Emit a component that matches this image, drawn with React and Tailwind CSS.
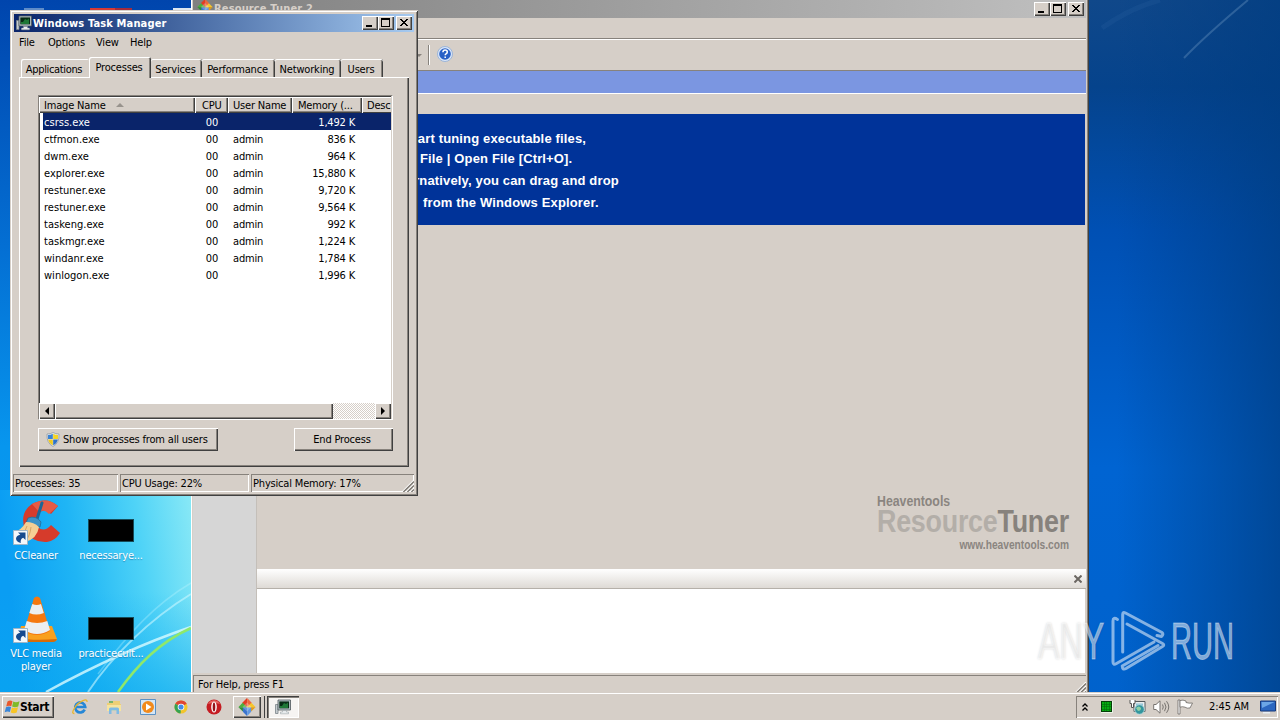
import React from "react";
import { clsx } from "clsx";

const raised =
  "bg-[#d6cfc8] shadow-[inset_1px_1px_0_#fff,inset_-1px_-1px_0_#404040,inset_-2px_-2px_0_#87827c]";
const sunken = "shadow-[inset_1px_1px_0_#87827c,inset_-1px_-1px_0_#fff]";

const processes = [
  { name: "csrss.exe", cpu: "00", user: "", memory: "1,492 K" },
  { name: "ctfmon.exe", cpu: "00", user: "admin", memory: "836 K" },
  { name: "dwm.exe", cpu: "00", user: "admin", memory: "964 K" },
  { name: "explorer.exe", cpu: "00", user: "admin", memory: "15,880 K" },
  { name: "restuner.exe", cpu: "00", user: "admin", memory: "9,720 K" },
  { name: "restuner.exe", cpu: "00", user: "admin", memory: "9,564 K" },
  { name: "taskeng.exe", cpu: "00", user: "admin", memory: "992 K" },
  { name: "taskmgr.exe", cpu: "00", user: "admin", memory: "1,224 K" },
  { name: "windanr.exe", cpu: "00", user: "admin", memory: "1,784 K" },
  { name: "winlogon.exe", cpu: "00", user: "", memory: "1,996 K" },
];

const tabs = [
  { label: "Applications", width: "w-[68px]" },
  { label: "Processes", width: "w-[62px]", active: true },
  { label: "Services", width: "w-[51px]" },
  { label: "Performance", width: "w-[73px]" },
  { label: "Networking", width: "w-[66px]" },
  { label: "Users", width: "w-[42px]" },
];

const Wallpaper = () => (
  <svg className="absolute inset-0" width="1280" height="720" viewBox="0 0 1280 720">
    <defs>
      <linearGradient id="wpLeft" x1="0" y1="0" x2="0" y2="1">
        <stop offset="0" stopColor="#0045ad" />
        <stop offset="0.35" stopColor="#0470d4" />
        <stop offset="0.62" stopColor="#0796ee" />
        <stop offset="1" stopColor="#0398f4" />
      </linearGradient>
      <linearGradient id="wpGlow" x1="0" y1="0.15" x2="1" y2="0">
        <stop offset="0" stopColor="#0a9df3" />
        <stop offset="0.35" stopColor="#1fb5f5" />
        <stop offset="0.7" stopColor="#4fd3f7" />
        <stop offset="1" stopColor="#8ae9f6" />
      </linearGradient>
      <linearGradient id="wpFade" x1="0" y1="0" x2="0" y2="1">
        <stop offset="0.5" stopColor="#0ba9f2" stopOpacity="0" />
        <stop offset="1" stopColor="#08a6ef" stopOpacity="0.6" />
      </linearGradient>
      <linearGradient id="wpRight" x1="0" y1="0" x2="0" y2="1">
        <stop offset="0" stopColor="#10488a" />
        <stop offset="0.12" stopColor="#05438c" />
        <stop offset="0.32" stopColor="#0050b4" />
        <stop offset="0.65" stopColor="#0064d2" />
        <stop offset="1" stopColor="#0062cc" />
      </linearGradient>
      <linearGradient id="wpShade" x1="0" y1="0" x2="1" y2="0">
        <stop offset="0.15" stopColor="#003c80" stopOpacity="0" />
        <stop offset="1" stopColor="#003c80" stopOpacity="0.7" />
      </linearGradient>
    </defs>
    <rect width="192" height="720" fill="url(#wpLeft)" />
    <rect y="490" width="192" height="204" fill="url(#wpGlow)" />
    <rect y="490" width="192" height="204" fill="url(#wpFade)" />
    <rect x="1088" width="192" height="720" fill="url(#wpRight)" />
    <rect x="1088" width="192" height="720" fill="url(#wpShade)" />
    <path d="M1184 58 Q1205 36 1248 0" fill="none" stroke="#5d8ab8" strokeOpacity=".45" strokeWidth="2" />
    <path d="M1102 28 Q1130 8 1160 0" fill="none" stroke="#3d74ae" strokeOpacity=".15" strokeWidth="5" />
    <g fill="none">
      <path d="M46 692 C90 668 135 646 191 627" stroke="#d9fbff" strokeOpacity=".8" strokeWidth="2.5" />
      <path d="M88 692 C112 656 150 619 191 594" stroke="#c9f7ff" strokeOpacity=".6" strokeWidth="2" />
      <path d="M98 674 C128 634 155 604 191 583" stroke="#c9f7ff" strokeOpacity=".3" strokeWidth="1.5" />
      <path d="M118 692 C138 664 160 642 191 628" stroke="#8fe86a" strokeWidth="2.5" />
    </g>
    {/* icons cut off behind the front window */}
    <rect x="24" y="8" width="20" height="3" fill="#5f8cc8" />
    <rect x="90" y="8" width="25" height="4" fill="#d83a34" />
    <rect x="115" y="8" width="17" height="4" fill="#a52c3c" />
    <rect x="173" y="8" width="18" height="3" fill="#dce6f0" />
  </svg>
);

const CaptionButtons = () => (
  <div className="flex">
    <span className={clsx("flex h-[14px] w-4 items-end pb-[3px] pl-1", raised)}>
      <i className="h-[2px] w-[6px] bg-black" />
    </span>
    <span className={clsx("mr-[2px] flex h-[14px] w-4 items-start pt-[2px] pl-[3px]", raised)}>
      <i className="h-[9px] w-[9px] border border-t-2 border-black" />
    </span>
    <span className={clsx("flex h-[14px] w-4 items-start pt-[3px] pl-1", raised)}>
      <svg width="8" height="7" viewBox="0 0 8 7" shapeRendering="crispEdges">
        <path d="M0 0h2v1h1v1h2v-1h1v-1h2v1h-1v1h-1v1h-1v1h1v1h1v1h1v1h-2v-1h-1v-1h-2v1h-1v1h-2v-1h1v-1h1v-1h1v-1h-1v-1h-1v-1h-1z" />
      </svg>
    </span>
  </div>
);

const SizeGrip = () => (
  <svg width="12" height="12" viewBox="0 0 12 12" className="shrink-0">
    <path d="M0 12 12 0M4 12 12 4M8 12 12 8" stroke="#fff" strokeWidth="1.2" />
    <path d="M1.4 12 12 1.4M5.4 12 12 5.4M9.4 12 12 9.4" stroke="#7d7872" strokeWidth="1.4" />
  </svg>
);

const MonitorIcon = () => (
  <svg width="16" height="16" viewBox="0 0 16 16" className="shrink-0">
    <path d="M.5 5.5h2.500v9H.5z" fill="#c5ccd0" stroke="#7b8489" strokeWidth=".8" />
    <path d="M3 1h12.500v10H3z" fill="#bcc8cd" stroke="#4c5659" strokeWidth=".8" />
    <path d="M4.300 2.400h9.800v7H4.300z" fill="#082c15" />
    <path d="M5 7h2l2-3 2 1 2-1.500V9H5z" fill="#1e7736" />
    <path d="M7.500 11.500h4v1.500h2v1.800H5.500V13h2z" fill="#e7ebed" stroke="#8f999d" strokeWidth=".5" />
  </svg>
);

const TunerIcon = () => (
  <svg width="18" height="18" viewBox="0 0 18 18" className="shrink-0">
    <path d="M9 0 4.800 4.200v4.300h4.400z" fill="#e23c24" />
    <path d="M9.200 0v8.500h4V4.200z" fill="#f0663c" />
    <path d="M.5 9 4.600 4.800 8.600 8.800v.4H.5z" fill="#4ab03e" />
    <path d="M.5 9.200 4.600 13.200l4-4z" fill="#2f8f33" />
    <path d="M17.500 9 13.400 4.800 9.400 8.800v.4h8.100z" fill="#f6c62c" />
    <path d="M17.500 9.200 13.400 13.200l-4-4z" fill="#e59d16" />
    <path d="M9 18 4.800 13.800V9.600h4.400z" fill="#3974cf" />
    <path d="M9.200 18V9.600h4v4.200z" fill="#5f97e2" />
    <path d="M9 4.500 13.500 9 9 13.500 4.500 9z" fill="#fff" fillOpacity=".25" />
  </svg>
);

const ShieldIcon = () => (
  <svg width="14" height="15" viewBox="0 0 14 15" className="shrink-0">
    <path d="M7 .5Q9.500 2 13 2q.6 9-6 12.500Q.4 11 1 2 4.500 2 7 .5z" fill="#e4e9ee" stroke="#8a949e" strokeWidth=".7" />
    <path d="M6.800 1.800V7H2Q1.800 5 2 3q3 0 4.800-1.200z" fill="#3b83d4" />
    <path d="M7.200 1.800V7H12q.2-2 0-4-3 0-4.800-1.200z" fill="#f5d423" />
    <path d="M6.800 13.200V7.400H2.100q.9 4 4.700 5.800z" fill="#f0c91e" />
    <path d="M7.200 13.200V7.400h4.700q-.9 4-4.700 5.800z" fill="#2f72c6" />
  </svg>
);

const ShortcutArrow = () => (
  <svg width="15" height="15" viewBox="0 0 15 15" className="absolute bottom-0 left-0">
    <path d="M.5.500h14v14H.5z" fill="#f5f8fb" stroke="#9fb6c8" />
    <path d="M5 2.500h7.500V10L10.200 7.700Q7 9 7.800 13 3 11.500 3 8.500 3.500 5.500 7.300 4.800z" fill="#174a8e" />
  </svg>
);

const CCleanerIcon = () => (
  <svg width="48" height="46" viewBox="0 0 48 46" className="absolute right-0 bottom-0">
    <path d="M45 7Q34-3 19 5 6 14 12 31q7 13 22 12 8-1 13-9l-9-8q-7 8-13 2-5-9 2-15 5-4 11 2z" fill="#d63b2b" />
    <path d="M45 7Q34-3 19 5l7 8q5-4 10 2z" fill="#e65b45" />
    <path d="M29 4 24 20" stroke="#1e6795" strokeWidth="3" strokeLinecap="round" />
    <path d="M15 19q8-3 13 4l-1 5-14-4z" fill="#3d93c8" stroke="#23668f" strokeWidth=".7" />
    <path d="M13 23q8 0 13 5Q24 40 12 43-1 41-1 34q9-2 14-11z" fill="#f5cf95" />
    <path d="M14 27q-3 9-9 12M18 28q-1 9-5 13" stroke="#d9a566" fill="none" />
  </svg>
);

const VlcIcon = () => (
  <svg width="48" height="48" viewBox="0 0 48 48" className="absolute right-0 bottom-0">
    <path d="M10 31h31l5 13q0 2-3 2H10q-4 0-3-3z" fill="#f9a01e" />
    <path d="M7 43q15 3 39 1-1 3-4 3H10q-4 0-3-4z" fill="#d86b08" />
    <path d="M23 3q3-3 6 0l10 33q-13 8-26 0z" fill="#f5780f" />
    <path d="m21.300 9-3 9q7 3 14.500 0L30 9q-4 2-8.700 0zM15.700 26l-2.700 9q13 8 26 0l-2.700-9q-10 4-20.600 0z" fill="#eceef0" />
  </svg>
);

const DesktopIcon = ({ label, children, className }) => (
  <div className={clsx("absolute flex w-[72px] flex-col items-center", className)}>
    {children}
    <span className="mt-1 text-center leading-[13px] text-white [text-shadow:0_1px_1px_#18609090]">
      {label}
    </span>
  </div>
);

const ResourceTuner = () => (
  <div className="absolute top-0 left-[191px] flex h-[693px] w-[898px] flex-col border-r border-l border-r-[#404040] border-l-white bg-[#d6cfc8] pr-[2px] pl-px shadow-[inset_-1px_0_0_#87827c]">
    <div className="flex h-[18px] shrink-0 items-start overflow-hidden bg-linear-to-r from-[#808080] to-[#c0c0c0]">
      <div className="-mt-[1px] ml-1 h-4 w-4 shrink-0 [&>svg]:h-4 [&>svg]:w-4">
        <TunerIcon />
      </div>
      <span className="mt-[1px] ml-px grow text-[11px] leading-4 font-bold tracking-[0.150px] text-[#d6cfc8]">
        Resource Tuner 2
      </span>
      <div className="mt-[2px] mr-[2px]">
        <CaptionButtons />
      </div>
    </div>
    <div className="h-[21px] shrink-0 border-b border-[#87827c]" />
    <div className="flex h-[31px] shrink-0 items-center border-t border-white pl-[223px]">
      <i className="h-0 w-0 border-x-[3px] border-t-[3px] border-x-transparent border-t-[#87827c]" />
      <i className="ml-[6px] h-5 w-[2px] border-r border-l border-r-white border-l-[#87827c]" />
      <svg width="16" height="16" viewBox="0 0 16 16" className="mb-[2px] ml-[7px]">
        <circle cx="8" cy="8" r="7.500" fill="#dce8fa" stroke="#8cabd6" strokeWidth=".8" />
        <circle cx="8" cy="8" r="5.800" fill="#2860c6" />
        <path d="M5.900 6.300q.1-2.200 2.200-2.200 2.200 0 2.200 1.900 0 1.100-1.200 1.800-.9.500-.9 1.400M8.200 10.600v1.500" fill="none" stroke="#fff" strokeWidth="1.500" />
      </svg>
    </div>
    <div className="h-[24px] shrink-0 border-t border-b border-t-[#87827c] border-b-white bg-[#7b96e1]" />
    <div className="h-[20px] shrink-0" />
    <div className="mr-px flex h-[111px] shrink-0 flex-col bg-[#003399] pt-[15px] pl-[211px] font-['Liberation_Sans'] text-[13px] font-bold tracking-[0.150px] whitespace-nowrap text-white">
      <p className="ml-[2px] h-[20px] leading-[20px]">start tuning executable files,</p>
      <p className="ml-[16px] h-[22px] leading-[20px]">File | Open File [Ctrl+O].</p>
      <p className="ml-[-15px] h-[22px] leading-[20px]">Alternatively, you can drag and drop</p>
      <p className="ml-[19px] leading-[20px]">from the Windows Explorer.</p>
    </div>
    <div className="flex min-h-0 grow">
      <div className="w-[64px] shrink-0 border-r border-[#c4bfb9] bg-[#d6d6d6]" />
      <div className="flex min-w-0 grow flex-col">
        <div className="flex grow flex-col items-end justify-end pr-[17px] pb-4 font-['Liberation_Sans'] font-bold tracking-normal text-[#8a8580]">
          <div className="flex w-[192px] flex-col whitespace-nowrap">
            <span className="h-[13px] origin-left scale-x-[0.82] text-[15px] leading-[14px]">Heaventools</span>
            <span className="mt-px h-[26px] origin-left scale-x-[0.84] text-[32px] leading-[26px] tracking-[-0.300px] text-[#b3aea8]">
              Resource<b className="text-[#87827d]">Tuner</b>
            </span>
            <span className="mt-[3px] origin-right scale-x-[0.85] text-right text-[12px] leading-4">www.heaventools.com</span>
          </div>
        </div>
        <div className="flex h-[20px] shrink-0 items-center justify-end border-b border-[#b5b0a9] bg-linear-to-b from-white to-[#dedad5] pr-1">
          <svg width="8" height="8" viewBox="0 0 8 8">
            <path d="m.5.500 7 7m0-7-7 7" stroke="#6b6762" strokeWidth="2" />
          </svg>
        </div>
        <div className="mr-px h-[84px] shrink-0 bg-white" />
      </div>
    </div>
    <div className="mt-[2px] flex h-[18px] shrink-0 items-center justify-between border-t border-l border-[#87827c] pl-1">
      <span className="leading-4">For Help, press F1</span>
      <span className="pt-[6px]"><SizeGrip /></span>
    </div>
  </div>
);

const ProcessList = () => (
  <div className="flex h-[325px] w-[355px] flex-col overflow-hidden border border-t-[#87827c] border-r-white border-b-white border-l-[#87827c] bg-[#d6cfc8] pr-px">
    <div className="flex h-[17px] shrink-0 overflow-hidden border-t border-[#404040] bg-[#d6cfc8] leading-[17px]">
      <span className={clsx("flex w-[156px] shrink-0 items-center pl-[5px]", raised)}>
        Image Name
        <i className="ml-[10px] h-0 w-0 border-x-[4px] border-b-[4px] border-x-transparent border-b-[#98938d]" />
      </span>
      <span className={clsx("w-[33px] shrink-0 pl-[7px]", raised)}>CPU</span>
      <span className={clsx("w-[64px] shrink-0 pl-[5px]", raised)}>User Name</span>
      <span className={clsx("w-[70px] shrink-0 pl-[6px]", raised)}>Memory (...</span>
      <span className="w-[40px] shrink-0 pl-[5px] shadow-[inset_1px_1px_0_#fff,inset_0_-1px_0_#404040]">Desc</span>
    </div>
    <div className="grow border-l border-[#404040] bg-white">
      {processes.map((process, i) => (
        <div
          key={i}
          className={clsx(
            "flex h-[17px] leading-[19px]",
            i === 0 && "ml-[3px] bg-[#0a246a] text-white"
          )}
        >
          <span className={clsx("shrink-0 tracking-[0.020px]", i === 0 ? "w-[152px] pl-px" : "w-[155px] pl-[4px]")}>
            {process.name}
          </span>
          <span className="w-[23px] shrink-0 text-right">{process.cpu}</span>
          <span className="w-[64px] shrink-0 pl-[15px]">{process.user}</span>
          <span className="w-[73px] shrink-0 text-right">{process.memory}</span>
        </div>
      ))}
    </div>
    <div className="flex h-[16px] shrink-0 bg-[repeating-conic-gradient(#fff_0_25%,#d6cfc8_0_50%)] bg-size-[2px_2px]">
      <span className={clsx("flex w-4 items-center justify-center", raised)}>
        <i className="h-0 w-0 border-y-[4px] border-r-[4px] border-y-transparent border-r-black" />
      </span>
      <span className={clsx("w-[278px]", raised)} />
      <span className={clsx("ml-auto flex w-4 items-center justify-center", raised)}>
        <i className="h-0 w-0 border-y-[4px] border-l-[4px] border-y-transparent border-l-black" />
      </span>
    </div>
  </div>
);

const TaskManager = () => (
  <div className="absolute top-[10px] left-[10px] flex h-[486px] w-[408px] flex-col bg-[#d6cfc8] p-[3px] pt-[4px] pl-[4px] shadow-[inset_1px_1px_0_#d6cfc8,inset_-1px_-1px_0_#404040,inset_2px_2px_0_#fff,inset_-2px_-2px_0_#87827c]">
    <div className="mr-px flex h-[18px] shrink-0 items-center bg-linear-to-r from-[#0a246a] to-[#a6caf0] pr-[2px] pl-[2px]">
      <MonitorIcon />
      <span className="ml-px grow pt-[2px] text-[11px] font-bold tracking-[0.150px] whitespace-nowrap text-white">
        Windows Task Manager
      </span>
      <CaptionButtons />
    </div>
    <div className="flex h-[20px] shrink-0 items-center pt-[2px] pl-[5px]">
      <span className="w-[29px]">File</span>
      <span className="w-[48px]">Options</span>
      <span className="w-[34px]">View</span>
      <span>Help</span>
    </div>
    <div className="flex h-[25px] shrink-0 items-end pl-[7px]">
      {tabs.map((tab) => (
        <span
          key={tab.label}
          className={clsx(
            "flex shrink-0 justify-center rounded-t-[2px] pr-[2px] whitespace-nowrap",
            tab.width,
            tab.active
              ? "relative z-10 -mb-px h-[21px] bg-[#d6cfc8] leading-[21px] shadow-[inset_1px_1px_0_#fff,inset_-1px_0_0_#404040,inset_-2px_0_0_#87827c]"
              : clsx(
                  "h-[18px] leading-[21px]",
                  tab.label === "Applications"
                    ? "tracking-[-0.350px] shadow-[inset_1px_1px_0_#fff]"
                    : "shadow-[inset_0_1px_0_#fff,inset_-1px_0_0_#404040,inset_-2px_0_0_#87827c]"
                )
          )}
        >
          {tab.label}
        </span>
      ))}
    </div>
    <div className="ml-[5px] flex h-[390px] w-[390px] shrink-0 flex-col pt-[18px] pl-[19px] shadow-[inset_1px_1px_0_#fff,inset_-1px_-1px_0_#404040,inset_-2px_-2px_0_#87827c]">
      <ProcessList />
      <div className="mt-2 flex w-[355px] justify-between">
        <button className={clsx("flex h-[23px] w-[180px] items-center pl-2", raised)}>
          <ShieldIcon />
          <span className="ml-[3px] pt-px whitespace-nowrap">Show processes from all users</span>
        </button>
        <button className={clsx("h-[23px] w-[99px] pt-[2px] pr-[3px]", raised)}>End Process</button>
      </div>
    </div>
    <div className="mt-[7px] mr-px -ml-px flex h-[18px] shrink-0 gap-[2px] leading-[20px] whitespace-nowrap">
      <span className={clsx("w-[105px] pl-[2px]", sunken)}>Processes: 35</span>
      <span className={clsx("w-[129px] pl-[2px]", sunken)}>CPU Usage: 22%</span>
      <span className={clsx("flex grow items-end justify-between pl-[2px]", sunken)}>
        <span className="h-[18px]">Physical Memory: 17%</span>
        <SizeGrip />
      </span>
    </div>
  </div>
);

const StartFlag = () => (
  <svg width="17" height="16" viewBox="0 0 17 16" className="shrink-0">
    <path d="M3.500 2.500Q6 .8 8.500 2.200L7.300 7.200Q4.800 6 2.200 7.500z" fill="#e9582b" />
    <path d="M9.300 2.600Q12 4 15.500 2.300L14.200 7.500Q11 9 8.100 7.600z" fill="#7fba28" />
    <path d="M2 8.300Q4.700 6.900 7.100 8.100L5.900 13Q3.400 11.800.7 13.300z" fill="#3a86d8" />
    <path d="M7.900 8.500Q11 9.800 14 8.300L12.700 13.400Q9.700 15 6.700 13.400z" fill="#f8c526" />
  </svg>
);

const IeIcon = () => (
  <svg width="16" height="16" viewBox="0 0 16 16">
    <path d="M12.700 10.700A5 5 0 1 1 13.200 8H4.500" fill="none" stroke="#2687d6" strokeWidth="2.700" />
    <path d="M2.400 14.500Q-.5 14.800 1.700 10.500 5 4 11 1.600q4.500-1.800 4 1.400" fill="none" stroke="#e8b52d" strokeWidth="1.300" />
  </svg>
);

const ExplorerIcon = () => (
  <svg width="16" height="16" viewBox="0 0 16 16">
    <path d="M1 4h5l1-2h7v3h1v7H1z" fill="#edcf76" />
    <path d="M3 2h4v2H3z" fill="#75b56c" />
    <path d="M1 6h14v6H1z" fill="#f7e49e" />
    <path d="M3 15V10q0-1.500 1.500-1.500h7Q13 8.500 13 10v5h-2.500v-3.500h-5V15z" fill="#7fbbe4" />
  </svg>
);

const PlayerIcon = () => (
  <svg width="16" height="16" viewBox="0 0 16 16">
    <path d="M.5.500h15v15H.5z" fill="#d5e6f5" stroke="#5b91c4" />
    <circle cx="8" cy="8" r="6" fill="#f28a1b" />
    <path d="m6 4.500 5.500 3.500L6 11.500z" fill="#fff" />
  </svg>
);

const ChromeIcon = () => (
  <svg width="14" height="14" viewBox="0 0 16 16">
    <circle cx="8" cy="8" r="7.500" fill="#f2c52c" />
    <path d="M8 8 1.500 4.300A7.500 7.500 0 0 1 14.500 4.300z" fill="#df4535" />
    <path d="M8 8 1.500 4.300A7.500 7.500 0 0 0 7.500 15.500z" fill="#36a252" />
    <circle cx="8" cy="8" r="3.800" fill="#fff" />
    <circle cx="8" cy="8" r="2.900" fill="#438be8" />
  </svg>
);

const OperaIcon = () => (
  <svg width="16" height="16" viewBox="0 0 16 16">
    <circle cx="8" cy="8" r="7.500" fill="#c51c22" />
    <path d="M2 5a6.600 6.600 0 0 1 12 0q-6-2-12 0z" fill="#e56460" />
    <ellipse cx="8" cy="8" rx="2.800" ry="5.500" fill="#fff" />
    <ellipse cx="8" cy="8" rx="1.300" ry="4.600" fill="#96131a" />
  </svg>
);

const Taskbar = () => (
  <div className="absolute bottom-0 left-0 flex h-[28px] w-[1280px] items-start border-t border-[#d6cfc8] bg-[#d6cfc8] shadow-[inset_0_1px_0_#fff]">
    <button className={clsx("mt-[3px] ml-[2px] flex h-[22px] w-[52px] items-center pl-[2px] text-[12px] font-bold tracking-[-0.350px]", raised)}>
      <StartFlag />
      <span className="-ml-px">Start</span>
    </button>
    <div className="mt-[6px] ml-[18px] flex w-[150px] items-center justify-between">
      <IeIcon />
      <ExplorerIcon />
      <PlayerIcon />
      <ChromeIcon />
      <OperaIcon />
    </div>
    <div className={clsx("mt-[3px] ml-[11px] flex h-[22px] w-[28px] items-center pl-[5px]", raised)}>
      <TunerIcon />
    </div>
    <i className="mt-[3px] ml-px h-[22px] w-[3px] border-r border-[#404040]" />
    <div className="mt-[3px] ml-[2px] flex h-[22px] w-[32px] items-center justify-center bg-[#f6f4f2] shadow-[inset_1px_1px_0_#404040,inset_2px_2px_0_#87827c,inset_-1px_-1px_0_#fff]">
      <MonitorIcon />
    </div>
    <div className={clsx("mt-[3px] mr-[2px] ml-auto flex h-[22px] w-[202px] items-center", sunken)}>
      <svg width="6" height="8" viewBox="0 0 6 8" className="ml-[6px]">
        <path d="M.5 3.500 3 1l2.500 2.500M.5 7.500 3 5l2.500 2.500" fill="none" stroke="#000" strokeWidth="1.300" />
      </svg>
      <svg width="12" height="12" viewBox="0 0 12 12" className="ml-[13px]" shapeRendering="crispEdges">
        <path d="M0 0h12v12H0z" fill="#e7f4e4" />
        <path d="M0 0h11v11H0z" fill="#063d08" />
        <path d="M1 1h9v9H1z" fill="#07ab12" />
        <path d="M3 1v9M5.500 1v9M8 1v9M1 3h9M1 5.500h9M1 8h9" stroke="#056d0a" strokeWidth=".6" />
      </svg>
      <svg width="17" height="16" viewBox="0 0 17 16" className="ml-4">
        <path d="M5 2.500h11v10H5z" fill="#e9edee" stroke="#545b5e" />
        <path d="M7 4.500h7v6H7z" fill="#8ec3d8" />
        <circle cx="10.500" cy="10.500" r="4.800" fill="#34969e" stroke="#c6e1e4" strokeWidth=".8" />
        <path d="M7 9q3-3 5 0 0 3-3 3z" fill="#91d0a5" />
        <path d="M1 1v3.500h1.500v4h2v-4H6V1" fill="#fff" stroke="#565656" />
      </svg>
      <svg width="17" height="14" viewBox="0 0 17 14" className="ml-[7px]">
        <path d="M.7 4.500H3L7 .8v12.400L3 9.500H.7z" fill="#fff" stroke="#77736f" />
        <path d="M9.500 4.500q1.500 2.500 0 5M11.500 2.800q3 4.200 0 8.400M13.500 1.200q4.500 5.800 0 11.600" fill="none" stroke="#77736f" />
      </svg>
      <svg width="17" height="16" viewBox="0 0 17 16" className="ml-[7px]">
        <path d="M1 1h2v14H1z" fill="#fff" stroke="#6c6864" strokeWidth=".8" />
        <path d="M3 1.500q3-1 6 .5v1.500q3 1 6.500.5L13 9q-3 .7-5-.8-2.500-1-5 0z" fill="#fff" stroke="#6c6864" strokeWidth=".8" />
      </svg>
      <span className="ml-[15px] w-[42px] pt-px tracking-[-0.100px] whitespace-nowrap">2:45 AM</span>
      <svg width="16" height="14" viewBox="0 0 16 14" className="ml-[9px] shrink-0">
        <path d="M.5 1h15v10H.5z" fill="#2c67c0" stroke="#173a7d" />
        <path d="M1.500 2h13L2 8z" fill="#6ca6e6" />
        <path d="M3 12h7v1.500H3z" fill="#e9eef4" />
      </svg>
    </div>
  </div>
);

const Watermark = () => (
  <div className="absolute top-[608px] left-[1038px] flex items-center font-['Liberation_Sans'] text-[52px] leading-[66px] tracking-normal text-white/50 [-webkit-text-stroke:1px_rgb(255_255_255/0.4)]">
    <span className="w-[65px] [text-shadow:0_0_3px_#00000030]">
      <span className="inline-block origin-left scale-x-[0.62]">ANY</span>
    </span>
    <svg width="58" height="66" viewBox="0 0 58 66" className="ml-[7px] shrink-0" fill="none" stroke="#fff" strokeOpacity=".52" strokeWidth="3" strokeLinejoin="round" strokeLinecap="round">
      <path d="M7.500 11.500Q3 8.500 3 13V54Q3 57.500 6.500 55.500L44 34" />
      <path d="M12.700 44V6.500Q12.700 3.500 15.500 5L52 24.500Q54 26 51.500 28.500L47 27.500" />
      <path d="M17 16 52.500 35.500Q55 37 52.500 38.500L16 60.500Q12.500 62.500 12.200 58L48 37.500" />
    </svg>
    <span className="ml-[3px] inline-block origin-left scale-x-[0.56]">RUN</span>
  </div>
);

const App = () => (
  <div className="relative h-[720px] w-[1280px] overflow-hidden font-['DejaVu_Sans_Condensed','DejaVu_Sans',sans-serif] text-[11px] tracking-[-0.180px] text-black">
    <Wallpaper />
    <DesktopIcon label="CCleaner" className="top-[497px] left-0">
      <div className="relative ml-[1px] h-[48px] w-[48px]">
        <CCleanerIcon />
        <ShortcutArrow />
      </div>
    </DesktopIcon>
    <DesktopIcon label="necessarye..." className="top-[519px] left-[75px]">
      <div className="mb-[3px] h-[23px] w-[46px] border border-[#164b59] bg-black" />
    </DesktopIcon>
    <DesktopIcon label="VLC media player" className="top-[595px] left-0 px-2">
      <div className="relative h-[48px] w-[46px]">
        <VlcIcon />
        <ShortcutArrow />
      </div>
    </DesktopIcon>
    <DesktopIcon label="practicecult..." className="top-[617px] left-[75px]">
      <div className="mb-[3px] h-[23px] w-[46px] border border-[#164b59] bg-black" />
    </DesktopIcon>
    <ResourceTuner />
    <TaskManager />
    <Taskbar />
    <Watermark />
  </div>
);

export default App;
